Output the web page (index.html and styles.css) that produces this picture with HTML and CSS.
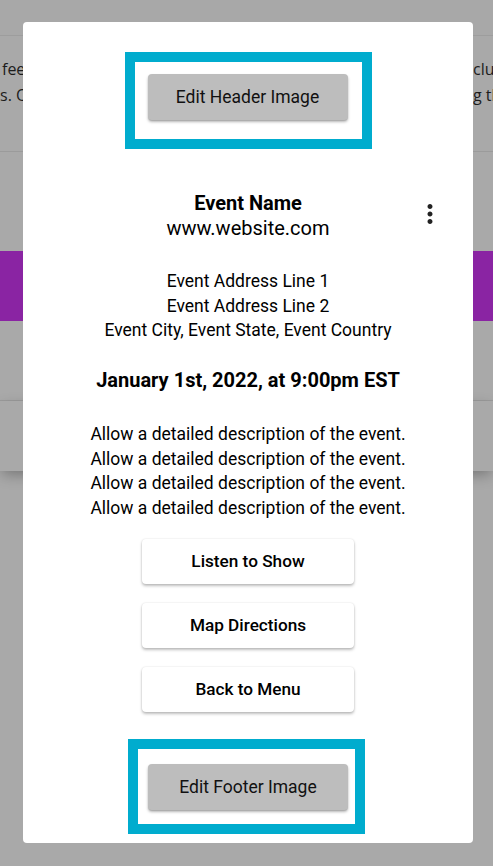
FILE: index.html
```html
<!DOCTYPE html>
<html lang="en">
<head>
<meta charset="utf-8">
<title>Event</title>
<link rel="stylesheet" href="styles.css">
</head>
<body>
<div class="page">
  <div class="topbar"></div>
  <div class="intro">
    <div class="intro-line"><span class="l first">fee and tea for everyone who</span><span class="r">cludes all the</span></div>
    <div class="intro-line"><span class="l">s. Our team is waiting for</span><span class="r">g the event</span></div>
  </div>
  <div class="spacer"></div>
  <div class="band"></div>
  <div class="row"></div>
  <div class="row last"></div>
</div>

<div class="modal">
  <div class="edit-box header-box">
    <button class="gray-btn">Edit Header Image</button>
  </div>

  <div class="event-head">
    <div class="event-title">
      <div class="name">Event Name</div>
      <div class="site">www.website.com</div>
    </div>
    <button class="kebab" aria-label="More">
      <svg viewBox="0 0 24 24" width="30" height="30"><path d="M12 8c1.1 0 2-.9 2-2s-.9-2-2-2-2 .9-2 2 .9 2 2 2zm0 2c-1.1 0-2 .9-2 2s.9 2 2 2 2-.9 2-2-.9-2-2-2zm0 6c-1.1 0-2 .9-2 2s.9 2 2 2 2-.9 2-2-.9-2-2-2z"/></svg>
    </button>
  </div>

  <div class="address">
    <div>Event Address Line 1</div>
    <div>Event Address Line 2</div>
    <div>Event City, Event State, Event Country</div>
  </div>

  <div class="date">January 1st, 2022, at 9:00pm EST</div>

  <div class="desc">
    <div>Allow a detailed description of the event.</div>
    <div>Allow a detailed description of the event.</div>
    <div>Allow a detailed description of the event.</div>
    <div>Allow a detailed description of the event.</div>
  </div>

  <div class="actions">
    <button class="white-btn">Listen to Show</button>
    <button class="white-btn">Map Directions</button>
    <button class="white-btn">Back to Menu</button>
  </div>

  <div class="edit-box footer-box">
    <button class="gray-btn">Edit Footer Image</button>
  </div>
</div>
</body>
</html>
```

FILE: styles.css
```css
* { box-sizing: border-box; }
html, body { margin: 0; padding: 0; }
body {
  background: #a9a9a9;
  width: 493px;
  height: 866px;
  overflow: hidden;
  font-family: Roboto, "Liberation Sans", sans-serif;
}

/* background page (dimmed) */
.page { width: 100%; }
.topbar {
  height: 36px;
  background: #a8a8a8;
  border-bottom: 1px solid #9d9d9d;
}
.intro {
  height: 116px;
  padding-top: 20px;
  border-bottom: 1px solid #9b9b9b;
  background: #a9a9a9;
  font-family: "Open Sans", "Liberation Sans", sans-serif;
  font-size: 16px;
  line-height: 26px;
  color: #1c1c1c;
}
.intro-line {
  display: flex;
  justify-content: space-between;
  white-space: nowrap;
  overflow: hidden;
}
.intro-line .l { padding-left: 0; }
.intro-line .l.first { padding-left: 2px; }
.intro-line .r { width: 20px; overflow: hidden; }
.spacer { height: 99px; background: #a9a9a9; }
.band { height: 70px; background: #8a24a3; }
.row {
  height: 80px;
  background: #a9a9a9;
  border-bottom: 1px solid #9b9b9b;
}
.row.last {
  height: 70px;
  border-bottom: none;
  position: relative;
  box-shadow: 0 5px 14px -2px rgba(0,0,0,0.32);
}

/* modal */
.modal {
  position: fixed;
  top: 22px;
  left: 23px;
  width: 450px;
  height: 821px;
  background: #fff;
  border-radius: 4px;
  padding-top: 30px;
  display: flex;
  flex-direction: column;
  align-items: center;
  color: #000;
  font-size: 17.5px;
  line-height: 24.5px;
  text-align: center;
}

.edit-box {
  border: 10px solid #00acce;
  display: flex;
}
.header-box { padding: 12px 14px 19px 13px; }
.footer-box { padding: 15px 7px 14px 10px; margin-top: 27px; margin-right: 3px; }

.gray-btn {
  width: 200px;
  height: 46px;
  border: none;
  border-radius: 4px;
  background: #bdbdbd;
  box-shadow: 0 2px 3px rgba(0,0,0,0.28), 0 1px 1px rgba(0,0,0,0.12);
  font-family: Roboto, "Liberation Sans", sans-serif;
  font-size: 17.5px;
  font-weight: 400;
  color: #111;
  padding: 0;
}

.event-head {
  align-self: stretch;
  margin-top: 42px;
  display: grid;
  grid-template-columns: 1fr auto 1fr;
  font-size: 20px;
  line-height: 25px;
}
.event-title { grid-column: 2; }
.name { font-weight: 700; }
.kebab {
  grid-column: 3;
  justify-self: end;
  align-self: start;
  margin: 8px 28px 0 0;
  width: 30px;
  height: 30px;
  padding: 0;
  border: none;
  background: transparent;
  display: flex;
}
.kebab svg { fill: #222; }

.address { margin-top: 28px; }
.date { margin-top: 25px; font-weight: 700; font-size: 20px; }
.desc { margin-top: 30px; }

.actions {
  margin-top: 18.5px;
  display: flex;
  flex-direction: column;
  gap: 19px;
}
.white-btn {
  width: 212px;
  height: 45px;
  border: none;
  border-radius: 4px;
  background: #fff;
  box-shadow: 0 2px 3px rgba(0,0,0,0.25), 0 0 2px rgba(0,0,0,0.12);
  font-family: Roboto, "Liberation Sans", sans-serif;
  font-size: 17.2px;
  font-weight: 500;
  color: #000;
  padding: 0;
}
```
